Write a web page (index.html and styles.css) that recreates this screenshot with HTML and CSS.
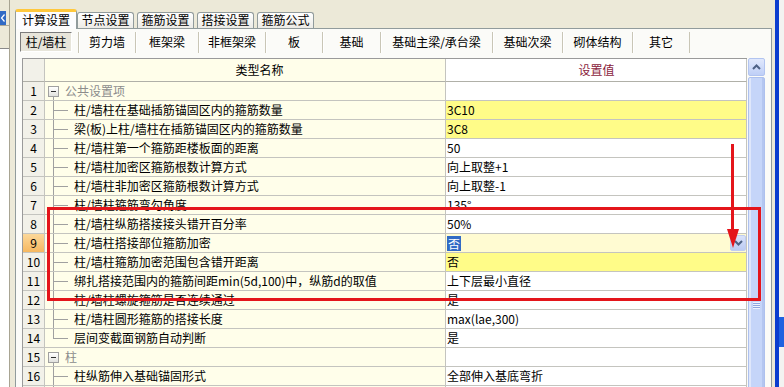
FILE: index.html
```html
<!DOCTYPE html>
<html lang="zh-CN">
<head>
<meta charset="utf-8">
<title>计算设置</title>
<link rel="stylesheet" href="styles.css">
</head>
<body>
<div class="app">
  <aside class="side">
    <div class="side-btn"><svg width="6" height="14" viewBox="0 0 6 14"><path d="M4.5 3.5 L1.5 7 L4.5 10.5" fill="none" stroke="#ffffff" stroke-width="1.2"/></svg></div>
    <div class="side-top"></div>
    <div class="side-list"></div>
  </aside>

  <section class="tabs">
    <div class="tab-strip">
      <div class="tab active">计算设置</div>
      <div class="tab">节点设置</div>
      <div class="tab">箍筋设置</div>
      <div class="tab">搭接设置</div>
      <div class="tab">箍筋公式</div>
    </div>
    <div class="page">
      <div class="subtabs">
        <div class="st first"><span class="st-sel">柱/墙柱</span></div>
        <div class="st">剪力墙</div>
        <div class="st">框架梁</div>
        <div class="st">非框架梁</div>
        <div class="st">板</div>
        <div class="st">基础</div>
        <div class="st">基础主梁/承台梁</div>
        <div class="st">基础次梁</div>
        <div class="st">砌体结构</div>
        <div class="st last">其它</div>
      </div>

      <div class="grid">
        <div class="table">
          <div class="row head">
            <div class="num h-gray"></div>
            <div class="name h-gray">类型名称</div>
            <div class="val h-orange">设置值</div>
          </div>
          <div class="row">
            <div class="num">1</div>
            <div class="name group"><span class="minus"></span><span class="gtext">公共设置项</span></div>
            <div class="val"></div>
          </div>
          <div class="row">
            <div class="num">2</div>
            <div class="name branch">柱/墙柱在基础插筋锚固区内的箍筋数量</div>
            <div class="val yel">3C10</div>
          </div>
          <div class="row">
            <div class="num">3</div>
            <div class="name branch">梁(板)上柱/墙柱在插筋锚固区内的箍筋数量</div>
            <div class="val yel">3C8</div>
          </div>
          <div class="row">
            <div class="num">4</div>
            <div class="name branch">柱/墙柱第一个箍筋距楼板面的距离</div>
            <div class="val">50</div>
          </div>
          <div class="row">
            <div class="num">5</div>
            <div class="name branch">柱/墙柱加密区箍筋根数计算方式</div>
            <div class="val">向上取整+1</div>
          </div>
          <div class="row">
            <div class="num">6</div>
            <div class="name branch">柱/墙柱非加密区箍筋根数计算方式</div>
            <div class="val">向上取整-1</div>
          </div>
          <div class="row">
            <div class="num">7</div>
            <div class="name branch">柱/墙柱箍筋弯勾角度</div>
            <div class="val">135°</div>
          </div>
          <div class="row">
            <div class="num">8</div>
            <div class="name branch">柱/墙柱纵筋搭接接头错开百分率</div>
            <div class="val">50%</div>
          </div>
          <div class="row">
            <div class="num cur">9</div>
            <div class="name branch">柱/墙柱搭接部位箍筋加密</div>
            <div class="val edit"><span class="sel-text">否</span><span class="dd"><svg width="9" height="6" viewBox="0 0 9 6"><path d="M1 1 L4.5 4.5 L8 1" fill="none" stroke="#4d6185" stroke-width="2"/></svg></span></div>
          </div>
          <div class="row">
            <div class="num">10</div>
            <div class="name branch">柱/墙柱箍筋加密范围包含错开距离</div>
            <div class="val yel">否</div>
          </div>
          <div class="row">
            <div class="num">11</div>
            <div class="name branch">绑扎搭接范围内的箍筋间距min(5d,100)中，纵筋d的取值</div>
            <div class="val">上下层最小直径</div>
          </div>
          <div class="row">
            <div class="num">12</div>
            <div class="name branch">柱/墙柱螺旋箍筋是否连续通过</div>
            <div class="val">是</div>
          </div>
          <div class="row">
            <div class="num">13</div>
            <div class="name branch">柱/墙柱圆形箍筋的搭接长度</div>
            <div class="val">max(lae,300)</div>
          </div>
          <div class="row">
            <div class="num">14</div>
            <div class="name branch last-branch">层间变截面钢筋自动判断</div>
            <div class="val">是</div>
          </div>
          <div class="row">
            <div class="num">15</div>
            <div class="name group"><span class="minus"></span><span class="gtext">柱</span></div>
            <div class="val"></div>
          </div>
          <div class="row">
            <div class="num">16</div>
            <div class="name branch">柱纵筋伸入基础锚固形式</div>
            <div class="val">全部伸入基底弯折</div>
          </div>
          <div class="row">
            <div class="num"></div>
            <div class="name branch"></div>
            <div class="val"></div>
          </div>
        </div>
        <div class="vscroll">
          <div class="sb-up"><svg width="9" height="6" viewBox="0 0 9 6"><path d="M1 5 L4.5 1.5 L8 5" fill="none" stroke="#4d6185" stroke-width="2"/></svg></div>
          <div class="sb-thumb"><div class="grip"></div></div>
        </div>
      </div>
    </div>
  </section>

  <div class="gap"></div>
  <div class="edge"></div>
  <div class="far">
    <span class="far-blue"></span>
  </div>

  <div class="annot-rect"></div>
  <svg class="annot-arrow" width="14" height="106" viewBox="0 0 14 106">
    <rect x="5" y="0" width="3" height="88" fill="#e4151b"/>
    <polygon points="1,85 13,85 7,104" fill="#e4151b"/>
  </svg>
</div>
</body>
</html>
```

FILE: styles.css
```css
* { box-sizing: border-box; }
html, body { margin: 0; padding: 0; }
body {
  width: 784px;
  height: 387px;
  overflow: hidden;
  background: #ece9d8;
  font-family: "Noto Sans CJK SC", "Noto Sans", sans-serif;
  font-size: 12px;
  color: #000;
}
.app {
  position: relative;
  display: flex;
  height: 387px;
}

/* left collapsed panel */
.side {
  width: 10px;
  flex: none;
  display: flex;
  flex-direction: column;
  padding-top: 11px;
  border-right: 1px solid #a8a492;
}
.side-btn {
  width: 6px;
  height: 14px;
  background: #316ac5;
  display: flex;
}
.side-top {
  height: 23px;
  border-top: 1px solid #aca899;
}
.side-list {
  flex: 1;
  background: #fff;
  border-top: 1px solid #8a8a8a;
}

/* main tab control */
.tabs {
  width: 757px;
  flex: none;
  margin-left: 5px;
  margin-top: 9px;
  display: flex;
  flex-direction: column;
}
.tab-strip {
  height: 19px;
  display: flex;
  align-items: flex-end;
}
.tab {
  width: 57px;
  height: 16px;
  margin-right: 3px;
  text-align: center;
  line-height: 14px;
  border: 1px solid #919b9c;
  border-bottom: none;
  border-radius: 3px 3px 0 0;
  background: linear-gradient(#ffffff, #ecebe6);
}
.tab.active {
  width: 62px;
  height: 20px;
  margin-right: 0;
  margin-bottom: -1px;
  line-height: 16px;
  border-top: 3px solid #ffc83c;
  background: #fcfcfe;
  position: relative;
  z-index: 1;
}
.page {
  flex: 1;
  border: 1px solid #919b9c;
  background: #fbfbf8;
  padding: 0 4px 0 4px;
}

/* sub tab row */
.subtabs {
  height: 26px;
  display: grid;
  grid-template-columns: 58px 57px 63px 67px 57px 58px 112px 70px 70px 58px;
  align-items: center;
}
.st {
  height: 21px;
  line-height: 20px;
  text-align: center;
  border-left: 1px solid #c9c6b6;
  box-shadow: inset 1px 0 #ffffff;
  white-space: nowrap;
}
.st.first {
  border-left: none;
  box-shadow: none;
  text-align: left;
  height: 20px;
}
.st.last { border-right: 1px solid #c9c6b6; }
.st-sel {
  display: block;
  width: 52px;
  height: 20px;
  line-height: 18px;
  text-align: center;
  background: #e7e5da;
  border-top: 1px solid #7c7c7c;
  border-left: 1px solid #7c7c7c;
  border-right: 1px solid #ffffff;
  border-bottom: 1px solid #ffffff;
}

/* grid */
.grid {
  display: flex;
  margin-left: 2px;
  margin-top: 3px;
}
.table {
  width: 725px;
  flex: none;
  border-left: 1px solid #9a9a9a;
  border-top: 1px solid #9a9a9a;
}
.row {
  display: grid;
  grid-template-columns: 22px 401px 301px;
  height: 19px;
}
.row > div {
  border-right: 1px solid #c4c4bf;
  border-bottom: 1px solid #c4c4bf;
  line-height: 18px;
  white-space: nowrap;
  overflow: hidden;
}
.row.head { height: 23px; }
.row.head > div {
  line-height: 22px;
  text-align: center;
  border-bottom-color: #b0b0a8;
}
.h-gray { background: linear-gradient(#fefefd, #efeee8); }
.h-orange {
  background: linear-gradient(#fde7b8, #f4b862);
  color: #8a1c3c;
}

.num {
  text-align: center;
  background: #f2f1e9;
}
.num.cur { background: linear-gradient(#fcd89a, #f6b860); }

.name {
  background: #fffeea;
  padding-left: 29px;
}
.name.branch {
  background:
    linear-gradient(#a0a0a0, #a0a0a0) 8px 0 / 1px 100% no-repeat,
    linear-gradient(#a0a0a0, #a0a0a0) 8px 9px / 15px 1px no-repeat,
    #fffeea;
}
.name.last-branch {
  background:
    linear-gradient(#a0a0a0, #a0a0a0) 8px 0 / 1px 10px no-repeat,
    linear-gradient(#a0a0a0, #a0a0a0) 8px 9px / 15px 1px no-repeat,
    #fffeea;
}
.name.group {
  display: flex;
  align-items: center;
  padding-left: 3px;
  background:
    linear-gradient(#a0a0a0, #a0a0a0) 8px 14px / 1px 6px no-repeat,
    #fffeea;
}
.minus {
  width: 11px;
  height: 11px;
  flex: none;
  margin-right: 6px;
  border: 1px solid #a0a0a0;
  background:
    linear-gradient(#303030, #303030) center / 5px 1px no-repeat,
    linear-gradient(#ffffff, #e2e2de);
}
.gtext { color: #8c8c8c; }

.val {
  background: #ffffff;
  padding-left: 1px;
}
.val.yel { background: #fffc88; }
.val.edit {
  background: #fffbd2;
  display: flex;
  align-items: center;
  justify-content: space-between;
}
.sel-text {
  background: #316ac5;
  color: #ffffff;
  line-height: 15px;
  padding: 0 1px;
}
.dd {
  width: 16px;
  height: 16px;
  display: flex;
  align-items: center;
  justify-content: center;
  background: linear-gradient(#d9e2fa, #bccbf3);
  border: 1px solid #c0cdf0;
  border-radius: 2px;
}

/* scrollbar */
.vscroll {
  width: 17px;
  flex: none;
  margin-left: 1px;
  display: flex;
  flex-direction: column;
}
.sb-up {
  height: 18px;
  display: flex;
  align-items: center;
  justify-content: center;
  background: linear-gradient(#e0e8fc, #bfcff7);
  border: 1px solid #b2c4f0;
  border-radius: 2px;
}
.sb-thumb {
  flex: 1;
  margin-top: 1px;
  background: linear-gradient(90deg, #dfe7fb 0, #dfe7fb 2px, #c5d5f9 2px, #c5d5f9 13px, #b4c6f0 13px);
  border: 1px solid #adc0ee;
  border-radius: 2px;
}
.grip {
  width: 7px;
  height: 7px;
  margin: 224px auto 0;
  background: repeating-linear-gradient(#eef3fe 0, #eef3fe 1px, #8ea6e0 1px, #8ea6e0 2px);
}

/* right window edge */
.gap { width: 3px; flex: none; }
.edge { width: 4px; flex: none; background: #0b3dcf; }
.far {
  flex: 1;
  background: #f3f3f1;
  overflow: hidden;
  display: flex;
  flex-direction: column;
}
.far-blue {
  display: block;
  margin-top: 317px;
  height: 30px;
  background: #1f62e0;
}

/* red annotation overlays */
.annot-rect {
  position: absolute;
  left: 47px;
  top: 207px;
  width: 714px;
  height: 94px;
  border: 3px solid #e4151b;
  pointer-events: none;
}
.annot-arrow {
  position: absolute;
  left: 726px;
  top: 144px;
}
```
